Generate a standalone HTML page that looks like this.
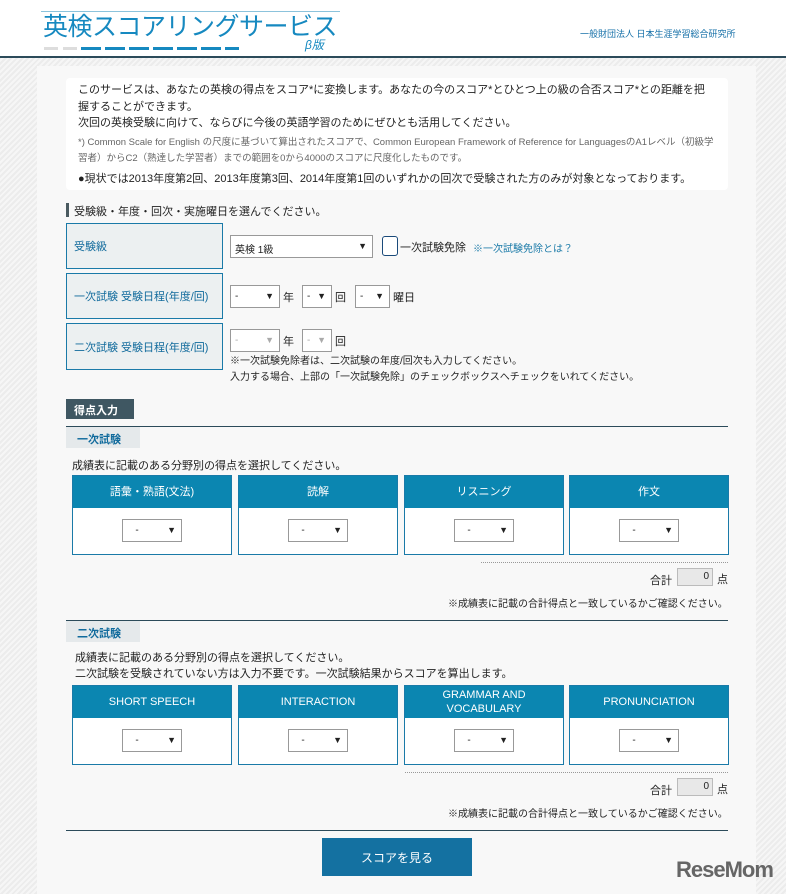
<!DOCTYPE html>
<html><head><meta charset="utf-8"><style>
*{box-sizing:border-box;margin:0;padding:0}
body{width:786px;height:894px;overflow:hidden;font-family:"Liberation Sans","Noto Sans CJK JP",sans-serif;font-size:11px;color:#222;background:repeating-linear-gradient(135deg,#ececec 0 2px,#f6f6f6 2px 4px);position:relative}
.a{position:absolute}
#hd{left:0;top:0;width:786px;height:58px;background:#fff;border-bottom:2px solid #2c4b5a}
#panel{left:37px;top:66px;width:719px;height:828px;background:#f8f8f8}
.lab{background:#ecf0f1;border:1px solid #1a7aa8;color:#106a9c;font-size:11px;padding-left:7px;display:flex;align-items:center;width:157px}
.sel{background:#fff;border:1px solid #999;height:23px;font-size:10px;padding:5px 4px}
.sel:after{content:"▼";position:absolute;right:5px;top:5px;font-size:9px}
.box{border:1px solid #1a7aa8;background:#fff;width:160px;height:80px}
.box .h{background:#0b86b1;color:#fff;height:32px;display:flex;align-items:center;justify-content:center;text-align:center;font-size:11px;line-height:14px}
.box .sel{left:49px;top:43px;width:60px}
.tab{background:#e5e9eb;color:#106a9c;font-weight:bold;font-size:11px;padding:4px 0 0 11px;width:74px;height:21px}
.line{height:1px;background:#2c4b5a;left:66px;width:662px}
</style></head><body>
<div id="hd" class="a">
<div class="a" style="left:41px;top:11px;width:299px;height:1px;background:#8cc3dc"></div>
<div class="a" style="left:43px;top:12px;font-size:25px;line-height:30px;color:#1689c0;letter-spacing:-0.5px;white-space:nowrap">英検スコアリングサービス</div>
<div class="a" style="left:305px;top:38px;font-size:12px;line-height:14px;color:#1689c0;font-style:italic">β版</div>
<div class="a" style="left:44px;top:47px;width:14px;height:3px;background:#ddd"></div>
<div class="a" style="left:63px;top:47px;width:14px;height:3px;background:#ddd"></div>
<div class="a" style="left:81px;top:47px;width:158px;height:3px;background:repeating-linear-gradient(90deg,#1689c0 0 20px,transparent 20px 24px)"></div>
<div class="a" style="left:580px;top:27px;font-size:9px;color:#1670a8">一般財団法人 日本生涯学習総合研究所</div>
</div>
<div id="panel" class="a"></div>
<div class="a" style="left:66px;top:78px;width:662px;height:112px;background:#fff;border-radius:4px"></div>
<div class="a" style="left:78px;top:82px;width:635px;font-size:11px;line-height:16.5px">このサービスは、あなたの英検の得点をスコア*に変換します。あなたの今のスコア*とひとつ上の級の合否スコア*との距離を把握することができます。<br>次回の英検受験に向けて、ならびに今後の英語学習のためにぜひとも活用してください。</div>
<div class="a" style="left:78px;top:135px;width:640px;font-size:9.5px;line-height:16px;color:#666">*) Common Scale for English の尺度に基づいて算出されたスコアで、Common European Framework of Reference for LanguagesのA1レベル（初級学習者）からC2（熟達した学習者）までの範囲を0から4000のスコアに尺度化したものです。</div>
<div class="a" style="left:78px;top:170px;font-size:11px;white-space:nowrap">●現状では2013年度第2回、2013年度第3回、2014年度第1回のいずれかの回次で受験された方のみが対象となっております。</div>

<div class="a" style="left:66px;top:203px;width:3px;height:14px;background:#4a5a60"></div>
<div class="a" style="left:74px;top:203px;font-size:11px">受験級・年度・回次・実施曜日を選んでください。</div>
<div class="a lab" style="left:66px;top:223px;height:46px">受験級</div>
<div class="a lab" style="left:66px;top:273px;height:46px">一次試験 受験日程(年度/回)</div>
<div class="a lab" style="left:66px;top:323px;height:47px">二次試験 受験日程(年度/回)</div>
<div class="a sel" style="left:230px;top:235px;width:143px">英検 1級</div>
<div class="a" style="left:382px;top:236px;width:16px;height:20px;border:1px solid #1a4a7a;border-radius:3px;background:#fff"></div>
<div class="a" style="left:400px;top:239px;font-size:11px">一次試験免除</div>
<div class="a" style="left:473px;top:240px;font-size:10px;color:#1a7aa8">※一次試験免除とは？</div>
<div class="a sel" style="left:230px;top:285px;width:50px">-</div>
<div class="a" style="left:283px;top:289px">年</div>
<div class="a sel" style="left:302px;top:285px;width:30px">-</div>
<div class="a" style="left:335px;top:289px">回</div>
<div class="a sel" style="left:355px;top:285px;width:35px">-</div>
<div class="a" style="left:393px;top:289px">曜日</div>
<div class="a sel" style="left:230px;top:329px;width:50px;color:#aaa">-</div>
<div class="a" style="left:283px;top:333px">年</div>
<div class="a sel" style="left:302px;top:329px;width:30px;color:#aaa">-</div>
<div class="a" style="left:335px;top:333px">回</div>
<div class="a" style="left:230px;top:354px;font-size:10px;line-height:16px">※一次試験免除者は、二次試験の年度/回次も入力してください。<br>入力する場合、上部の「一次試験免除」のチェックボックスへチェックをいれてください。</div>

<div class="a" style="left:66px;top:399px;width:68px;height:20px;background:#3f5762;color:#fff;font-weight:bold;font-size:11px;padding:3px 0 0 8px">得点入力</div>
<div class="a line" style="top:426px"></div>
<div class="a tab" style="top:427px;left:66px">一次試験</div>
<div class="a" style="left:72px;top:457px">成績表に記載のある分野別の得点を選択してください。</div>
<div class="a box" style="left:72px;top:475px"><div class="h">語彙・熟語(文法)</div><div class="a sel">&nbsp;&nbsp;&nbsp;-</div></div>
<div class="a box" style="left:238px;top:475px"><div class="h">読解</div><div class="a sel">&nbsp;&nbsp;&nbsp;-</div></div>
<div class="a box" style="left:404px;top:475px"><div class="h">リスニング</div><div class="a sel">&nbsp;&nbsp;&nbsp;-</div></div>
<div class="a box" style="left:569px;top:475px"><div class="h">作文</div><div class="a sel">&nbsp;&nbsp;&nbsp;-</div></div>
<div class="a" style="left:481px;top:562px;width:247px;border-top:1px dotted #999"></div>
<div class="a" style="left:650px;top:572px">合計</div>
<div class="a" style="left:677px;top:568px;width:36px;height:18px;background:#e8e8e8;border:1px solid #bbb;text-align:right;padding:2px 3px 0 0;font-size:10px">0</div>
<div class="a" style="left:717px;top:571px">点</div>
<div class="a" style="left:448px;top:595px;font-size:10px">※成績表に記載の合計得点と一致しているかご確認ください。</div>

<div class="a line" style="top:620px"></div>
<div class="a tab" style="top:621px;left:66px">二次試験</div>
<div class="a" style="left:75px;top:650px;line-height:16px">成績表に記載のある分野別の得点を選択してください。<br>二次試験を受験されていない方は入力不要です。一次試験結果からスコアを算出します。</div>
<div class="a box" style="left:72px;top:685px"><div class="h">SHORT SPEECH</div><div class="a sel">&nbsp;&nbsp;&nbsp;-</div></div>
<div class="a box" style="left:238px;top:685px"><div class="h">INTERACTION</div><div class="a sel">&nbsp;&nbsp;&nbsp;-</div></div>
<div class="a box" style="left:404px;top:685px"><div class="h">GRAMMAR AND<br>VOCABULARY</div><div class="a sel">&nbsp;&nbsp;&nbsp;-</div></div>
<div class="a box" style="left:569px;top:685px"><div class="h">PRONUNCIATION</div><div class="a sel">&nbsp;&nbsp;&nbsp;-</div></div>
<div class="a" style="left:405px;top:772px;width:323px;border-top:1px dotted #999"></div>
<div class="a" style="left:650px;top:782px">合計</div>
<div class="a" style="left:677px;top:778px;width:36px;height:18px;background:#e8e8e8;border:1px solid #bbb;text-align:right;padding:2px 3px 0 0;font-size:10px">0</div>
<div class="a" style="left:717px;top:781px">点</div>
<div class="a" style="left:448px;top:805px;font-size:10px">※成績表に記載の合計得点と一致しているかご確認ください。</div>
<div class="a line" style="top:830px"></div>
<div class="a" style="left:322px;top:838px;width:150px;height:38px;background:#1471a1;color:#fff;font-size:12px;display:flex;align-items:center;justify-content:center">スコアを見る</div>
<div class="a" style="left:676px;top:857px;font-size:22px;font-weight:bold;color:#666;letter-spacing:-1px">ReseMom</div>
</body></html>
